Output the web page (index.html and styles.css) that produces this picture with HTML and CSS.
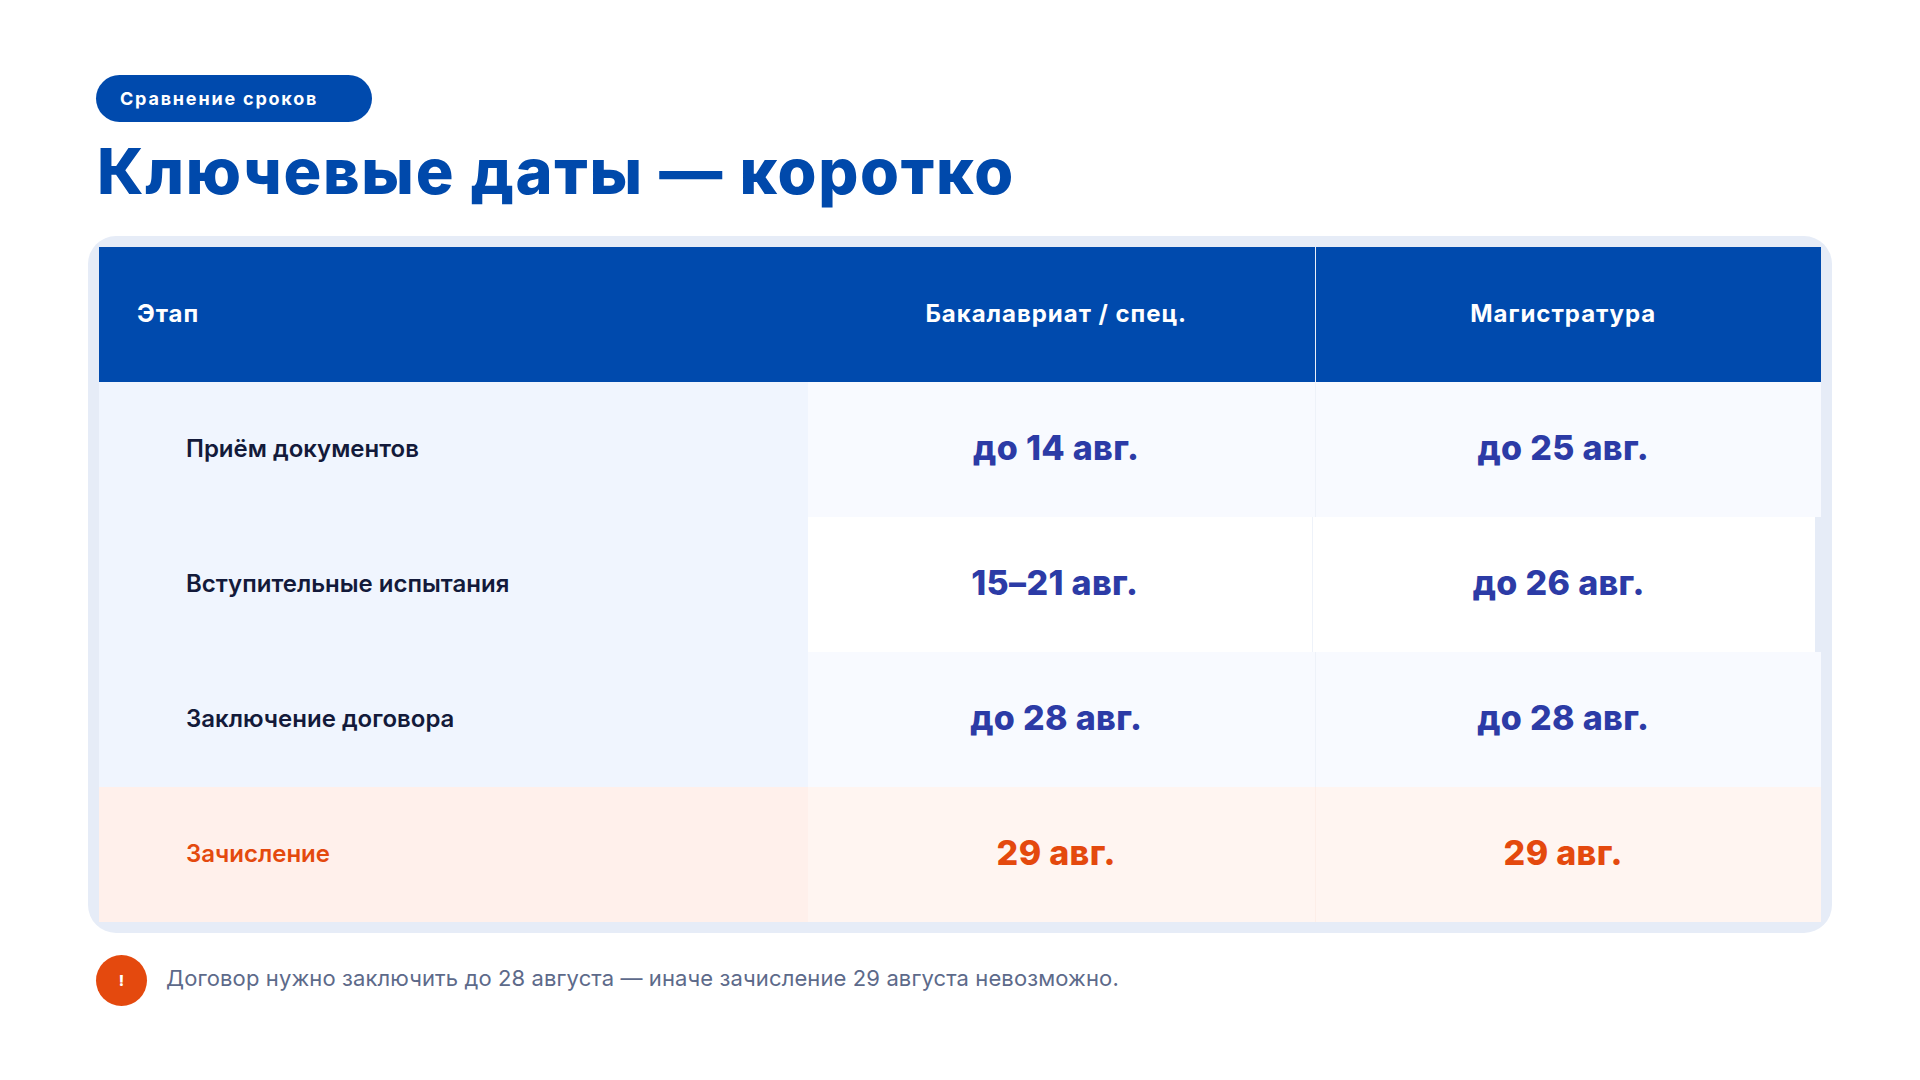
FILE: index.html
```html
<!DOCTYPE html>
<html lang="ru">
<head>
<meta charset="utf-8">
<title>Ключевые даты — коротко</title>
<link rel="stylesheet" href="styles.css">
</head>
<body>
<main class="slide">
  <div class="pill">Сравнение сроков</div>
  <h1 class="title">Ключевые даты — коротко</h1>
  <section class="card">
    <div class="table">
      <div class="row head">
        <div class="cell stage">Этап</div>
        <div class="cell val">Бакалавриат / спец.</div>
        <div class="cell val sep">Магистратура</div>
      </div>
      <div class="row alt">
        <div class="cell stage">Приём документов</div>
        <div class="cell val">до 14 авг.</div>
        <div class="cell val sep">до 25 авг.</div>
      </div>
      <div class="row plain">
        <div class="cell stage">Вступительные испытания</div>
        <div class="cell val">15–21 авг.</div>
        <div class="cell val sep">до 26 авг.</div>
      </div>
      <div class="row alt">
        <div class="cell stage">Заключение договора</div>
        <div class="cell val">до 28 авг.</div>
        <div class="cell val sep">до 28 авг.</div>
      </div>
      <div class="row accent">
        <div class="cell stage">Зачисление</div>
        <div class="cell val">29 авг.</div>
        <div class="cell val sep">29 авг.</div>
      </div>
    </div>
  </section>
  <div class="note">
    <span class="badge">!</span>
    <p class="note-text">Договор нужно заключить до 28 августа — иначе зачисление 29 августа невозможно.</p>
  </div>
</main>
</body>
</html>
```

FILE: styles.css
```css
* { box-sizing: border-box; }

html, body {
  margin: 0;
  padding: 0;
  background: #ffffff;
}

body {
  font-family: "Inter", "Noto Sans", "Liberation Sans", sans-serif;
  color: #141b3c;
}

.slide {
  width: 1920px;
  height: 1080px;
  padding: 75px 88px 0 88px;
  display: flex;
  flex-direction: column;
  align-items: flex-start;
}

.pill {
  margin-left: 8px;
  width: 276px;
  height: 47px;
  border-radius: 24px;
  background: #004aad;
  color: #ffffff;
  font-size: 18px;
  font-weight: 700;
  letter-spacing: 0.1em;
  display: flex;
  align-items: center;
  padding-left: 24px;
}

.title {
  margin: 18px 0 0 9px;
  font-size: 63px;
  line-height: 62px;
  font-weight: 800;
  color: #0049ab;
  letter-spacing: 0.027em;
}

.card {
  margin-top: 34px;
  width: 1744px;
  padding: 11px;
  background: #e6ecf7;
  border-radius: 28px;
}

.table {
  display: flex;
  flex-direction: column;
}

.row {
  display: grid;
  grid-template-columns: 709px 1fr 1fr;
  height: 135px;
}

.cell {
  display: flex;
  align-items: center;
}

.cell.val {
  justify-content: center;
  padding-right: 10px;
  padding-bottom: 4px;
  font-size: 34px;
  font-weight: 800;
  color: #2c3ba6;
  letter-spacing: 0.01em;
}

.cell.stage {
  padding-left: 87px;
  padding-bottom: 3px;
  font-size: 24px;
  font-weight: 600;
  color: #131a3a;
  background: #f0f5fe;
}

.cell.sep {
  border-left: 1px solid #eef2f9;
}

.row.head {
  background: #004aad;
}

.row.head .cell {
  font-size: 24px;
  font-weight: 700;
  color: #ffffff;
  background: transparent;
  letter-spacing: 0.04em;
  padding-bottom: 2px;
}

.row.head .cell.stage {
  padding-left: 38px;
}

.row.head .cell.sep {
  border-left: 1px solid #e9eef8;
}

.row.alt .cell.val {
  background: #f8faff;
}

.row.plain {
  margin-right: 6px;
}

.row.plain .cell.val {
  background: #ffffff;
}

.row.accent .cell.stage {
  background: #fff0eb;
  color: #e4490e;
}

.row.accent .cell.val {
  background: #fff5f1;
  color: #e4490e;
}

.row.accent .cell.sep {
  border-left-color: #fdeee8;
}

.note {
  margin: 22px 0 0 8px;
  display: flex;
  align-items: center;
  gap: 19px;
}

.badge {
  width: 51px;
  height: 51px;
  border-radius: 50%;
  background: #e4490e;
  color: #ffffff;
  font-size: 15px;
  font-weight: 800;
  display: flex;
  align-items: center;
  justify-content: center;
}

.note-text {
  margin: 0 0 5px 0;
  font-size: 22px;
  font-weight: 400;
  letter-spacing: 0.005em;
  color: #5d6a8a;
}
```
